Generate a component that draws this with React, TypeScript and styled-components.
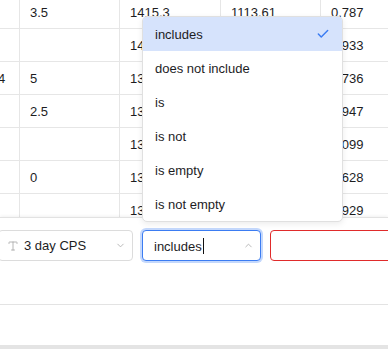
import React from "react";
import styled, { createGlobalStyle } from "styled-components";
import { Check, ChevronDown, ChevronUp, Type } from "lucide-react";

const GlobalStyle = createGlobalStyle`
    html, body {
        margin: 0;
        padding: 0;
        background: #ffffff;
    }
    body {
        font-family: "Liberation Sans", Arial, sans-serif;
        font-size: 13px;
        color: #1d1d1f;
    }
`;

const Page = styled.div`
    position: relative;
    display: flex;
    flex-direction: column;
    width: 388px;
    height: 349px;
    overflow: hidden;
`;

const TableArea = styled.div`
    height: 217px;
    overflow: hidden;
    flex-shrink: 0;
`;

const Grid = styled.div`
    display: grid;
    grid-template-columns: 100px 100px 101px 100px 100px;
    margin: -4px 0 0 -80px;
    width: max-content;
`;

const Cell = styled.div`
    height: 33px;
    box-sizing: border-box;
    display: flex;
    align-items: center;
    padding: 0 10px;
    border-right: 1px solid #e6e6e6;
    border-bottom: 1px solid #e6e6e6;
    white-space: nowrap;
`;

const Panel = styled.div`
    position: relative;
    flex: 1;
    display: flex;
    flex-direction: column;
    background: #ffffff;
    border-top: 1px solid #e2e2e2;
    box-shadow: 0 -1px 3px rgba(0, 0, 0, 0.06);
`;

const FilterSection = styled.div`
    height: 87px;
    box-sizing: border-box;
    padding-top: 12px;
    border-bottom: 1px solid #e3e3e3;
`;

const FilterRow = styled.div`
    display: flex;
    gap: 9px;
    margin-left: -2px;
`;

const Field = styled.div<{ $width: number; $tone: "plain" | "focus" | "error" }>`
    position: relative;
    display: flex;
    align-items: center;
    flex-shrink: 0;
    box-sizing: border-box;
    width: ${({ $width }) => $width}px;
    height: 31px;
    padding: 0 6px 0 ${({ $tone }) => ($tone === "plain" ? 8 : 11)}px;
    border-radius: 4px;
    background: #ffffff;
    border: 1px solid ${({ $tone }) =>
        $tone === "focus" ? "#3b7cf2" : $tone === "error" ? "#e02b2b" : "#dcdcdc"};
    box-shadow: ${({ $tone }) => ($tone === "focus" ? "0 0 0 2px #c4d8fc" : "none")};
`;

const FieldIcon = styled.span`
    display: flex;
    color: #a3a3a3;
    margin-right: 5px;
`;

const FieldText = styled.span`
    flex: 1;
    white-space: nowrap;
    color: #1d1d1f;
`;

const Caret = styled.span`
    display: inline-block;
    width: 1px;
    height: 16px;
    margin-left: 1px;
    vertical-align: -3px;
    background: #111111;
`;

const Arrow = styled.span`
    display: flex;
    color: #b3b3b3;
`;

const Menu = styled.ul`
    position: absolute;
    left: -1px;
    bottom: calc(100% + 9px);
    width: 199px;
    margin: 0;
    padding: 0;
    list-style: none;
    background: #ffffff;
    border: 1px solid #e0e0e0;
    border-radius: 5px;
    box-shadow: 0 2px 6px rgba(0, 0, 0, 0.08);
    overflow: hidden;
    z-index: 5;
`;

const MenuItem = styled.li<{ $active?: boolean }>`
    display: flex;
    align-items: center;
    justify-content: space-between;
    height: 34px;
    padding: 0 12px;
    background: ${({ $active }) => ($active ? "#d6e3fc" : "transparent")};
    color: #1d1d1f;
`;

const Footer = styled.div`
    margin-top: auto;
    height: 4px;
    background: #e4e4e4;
`;

const rows: string[][] = [
    ["", "3.5", "1415.3", "1113.61", "0.787"],
    ["", "", "1402.8", "1098.44", "0.933"],
    ["Jan 14, 2024", "5", "1388.1", "1092.17", "0.736"],
    ["", "2.5", "1371.9", "1085.06", "0.947"],
    ["", "", "1359.4", "1077.21", "1.099"],
    ["", "0", "1342.6", "1069.83", "0.628"],
    ["", "", "1330.2", "1061.47", "0.929"],
];

const options = ["includes", "does not include", "is", "is not", "is empty", "is not empty"];

const App = () => {
    return (
        <Page>
            <GlobalStyle />
            <TableArea>
                <Grid>
                    {rows.map((row, r) =>
                        row.map((value, c) => <Cell key={r + "_" + c}>{value}</Cell>)
                    )}
                </Grid>
            </TableArea>
            <Panel>
                <FilterSection>
                    <FilterRow>
                        <Field $width={135} $tone="plain">
                            <FieldIcon>
                                <Type size={12} strokeWidth={1.6} />
                            </FieldIcon>
                            <FieldText>3 day CPS</FieldText>
                            <Arrow>
                                <ChevronDown size={11} strokeWidth={2} />
                            </Arrow>
                        </Field>
                        <Field $width={119} $tone="focus">
                            <FieldText>
                                includes<Caret />
                            </FieldText>
                            <Arrow>
                                <ChevronUp size={11} strokeWidth={2} />
                            </Arrow>
                            <Menu>
                                {options.map((opt, idx) => (
                                    <MenuItem key={opt} $active={idx === 0}>
                                        {opt}
                                        {idx === 0 && <Check size={14} strokeWidth={2.5} color="#3b7cf2" />}
                                    </MenuItem>
                                ))}
                            </Menu>
                        </Field>
                        <Field $width={200} $tone="error" />
                    </FilterRow>
                </FilterSection>
                <Footer />
            </Panel>
        </Page>
    );
};

export default App;
